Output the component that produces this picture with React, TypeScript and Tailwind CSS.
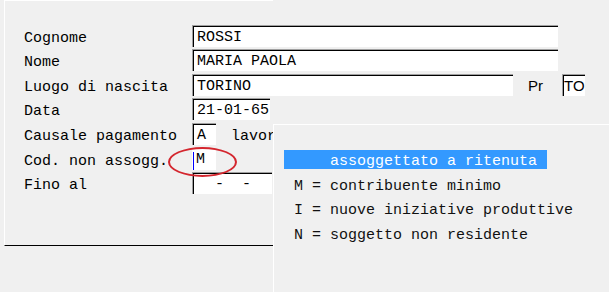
import React from "react";

const mono = { fontFamily: '"Liberation Mono", "DejaVu Sans Mono", monospace' };

function Box({ w, children, className = "" }: { w: string; children?: React.ReactNode; className?: string }) {
  return (
    <div
      className={`${w} h-[22px] mt-[1px] shrink-0 bg-white border-t border-l border-[#a0a0a0] shadow-[inset_1px_1px_0_#000] pl-[4px] pt-[3px] text-[15px] leading-[18px] text-black whitespace-pre overflow-hidden flex items-start ${className}`}
    >
      {children}
    </div>
  );
}

function Label({ children }: { children: React.ReactNode }) {
  return (
    <div className="w-[168px] shrink-0 mt-[4px] text-[15px] leading-[22px] text-black whitespace-pre">
      {children}
    </div>
  );
}

export default function App() {
  return (
    <div className="relative w-[609px] h-[292px] bg-[#f0f0f0] overflow-hidden" style={mono}>
      <div className="ml-[4px] w-[269px] h-[246px] border-t border-l border-white border-b border-b-black pt-[23px] pl-[19px]">
        <div className="flex flex-col">
          <div className="flex h-[24px] items-start">
            <Label>Cognome</Label>
            <Box w="w-[366px]">ROSSI</Box>
          </div>
          <div className="flex h-[25px] items-start">
            <Label>Nome</Label>
            <Box w="w-[366px]">MARIA PAOLA</Box>
          </div>
          <div className="flex h-[24px] items-start">
            <Label>Luogo di nascita</Label>
            <Box w="w-[321px]">TORINO</Box>
            <div
              className="ml-[15px] mt-[2px] w-[34px] shrink-0 text-[15px] leading-[22px] text-black"
              style={{ fontFamily: '"Liberation Sans", Arial, sans-serif' }}
            >
              Pr
            </div>
            <div
              className="w-[23px] h-[22px] mt-[1px] shrink-0 bg-white border-t border-l border-[#a0a0a0] shadow-[inset_1px_1px_0_#000] pl-[1px] text-[15px] leading-[22px] text-black overflow-hidden whitespace-pre"
              style={{ fontFamily: '"Liberation Sans", Arial, sans-serif' }}
            >
              TO
            </div>
          </div>
          <div className="flex h-[25px] items-start">
            <Label>Data</Label>
            <Box w="w-[78px]">21-01-65</Box>
          </div>
          <div className="flex h-[25px] items-start">
            <Label>Causale pagamento</Label>
            <Box w="w-[24px]">A</Box>
            <div className="ml-[15px] mt-[4px] text-[15px] leading-[22px] text-black whitespace-pre">lavoratore autonomo</div>
          </div>
          <div className="flex h-[24px] items-start">
            <Label>Cod. non assogg.</Label>
            <div className="w-[24px] h-[22px] mt-[1px] shrink-0 bg-white pl-[1px] pt-[3px] text-[15px] leading-[18px] text-black flex items-start">
              <span className="w-[1px] h-[18px] mt-[1px] bg-[#0000ff] shrink-0" />
              <span className="ml-[2px]">M</span>
            </div>
          </div>
          <div className="flex h-[24px] items-start">
            <Label>Fino al</Label>
            <Box w="w-[80px]">{"  -  -  "}</Box>
          </div>
        </div>
      </div>

      <div className="absolute left-[168px] top-[147px] w-[69px] h-[30px] rounded-[50%] border-[2.5px] border-[#d4262e]" />

      <div className="absolute left-[273px] top-[124px] right-0 bottom-0 bg-[#f0f0f0] border-l border-t border-white pl-[10px] pt-[25px]">
        <div className="flex flex-col text-[15px] text-[#111]">
          <div className="w-[263px] h-[19px] bg-[#3399ff] text-white pl-[10px] leading-[23px] whitespace-pre">{"    assoggettato a ritenuta"}</div>
          <div className="w-[263px] h-[19px] mt-[6px] pl-[10px] leading-[23px] whitespace-pre">M = contribuente minimo</div>
          <div className="w-[263px] h-[19px] mt-[5px] pl-[10px] leading-[23px] whitespace-pre">I = nuove iniziative produttive</div>
          <div className="w-[263px] h-[19px] mt-[6px] pl-[10px] leading-[23px] whitespace-pre">N = soggetto non residente</div>
        </div>
      </div>
    </div>
  );
}
